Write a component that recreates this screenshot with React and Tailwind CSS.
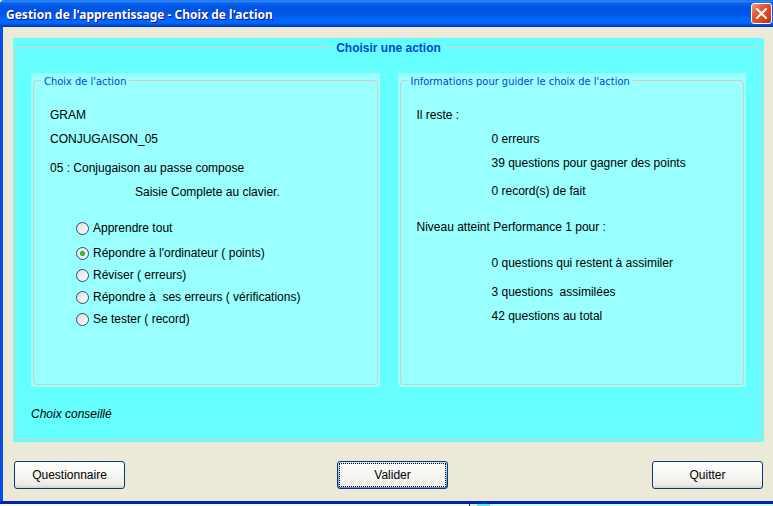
import { useState } from "react";

const SANS = "font-['Liberation_Sans',Arial,sans-serif]";

function Row({ className = "", children }) {
  return <p className={`h-4 whitespace-pre leading-4 ${className}`}>{children}</p>;
}

function Group({ title, children }) {
  return (
    <section className="flex bg-[#99ffff] px-[2px] pb-[2px]">
      <fieldset className="min-w-0 flex-1 rounded-[4px] border border-solid border-[#d6ccbc] pl-4 pb-[57px]">
        <legend className="-ml-[9px] h-[15px] px-[3px] font-['DejaVu_Sans_Condensed','DejaVu_Sans',Tahoma,sans-serif] text-[11px] leading-[18px] text-[#0046d5]">
          {title}
        </legend>
        {children}
      </fieldset>
    </section>
  );
}

const CHOICES = [
  { id: "tout", label: "Apprendre tout", space: "mt-5" },
  { id: "points", label: "Répondre à l'ordinateur ( points)", space: "mt-[9px]" },
  { id: "erreurs", label: "Réviser ( erreurs)", space: "mt-[6px]" },
  { id: "verif", label: "Répondre à  ses erreurs ( vérifications)", space: "mt-[6px]" },
  { id: "record", label: "Se tester ( record)", space: "mt-[6px]" },
];

function Choice({ choice, checked, onChange }) {
  return (
    <label className={`ml-[26px] flex h-4 items-center gap-1 whitespace-pre leading-4 ${choice.space}`}>
      <input
        type="radio"
        name="action"
        checked={checked}
        onChange={() => onChange(choice.id)}
        className="size-[13px] shrink-0 appearance-none rounded-full border border-[#21517f] bg-[linear-gradient(135deg,#dcdcd7,#ffffff)] checked:bg-[radial-gradient(circle,#55d551_0px,#21a121_2px,#f3f3ef_3px)]"
      />
      {choice.label}
    </label>
  );
}

function Button({ focused = false, children }) {
  return (
    <button
      type="button"
      className={`h-7 w-[111px] rounded-[3px] border border-[#003c74] text-center leading-4 ${
        focused
          ? "bg-[linear-gradient(#cee7ff,#6982ee)] p-px"
          : "bg-[linear-gradient(#ffffff,#f4f3ee_60%,#ecebe6_88%,#d6d0c5)]"
      }`}
    >
      {focused ? (
        <span className="flex h-full items-center justify-center border border-dotted border-black bg-[linear-gradient(#fafaf8,#f0f0ea)]">
          {children}
        </span>
      ) : (
        children
      )}
    </button>
  );
}

export default function App() {
  const [action, setAction] = useState("points");

  return (
    <div className={`bg-[#f6f3e9] text-[12px] text-black ${SANS}`}>
      <div className="border-b-[3px] border-[#0023b8] bg-[#ece9d8]">
        <header className="flex h-[27px] items-center justify-between rounded-tl-[4px] bg-[linear-gradient(#0a5bd8,#3c97ff_4%,#0a66ee_10%,#0054e3_25%,#0055e5_50%,#0066ff_70%,#0066ff_86%,#0046cf_94%,#003ab0)] pl-[6px] pr-px">
          <h1 className="pt-[2px] font-['Noto_Sans','Open_Sans',sans-serif] text-[12px] leading-4 font-bold whitespace-nowrap text-white [text-shadow:1px_1px_#0f1089]">
            Gestion de l'apprentissage - Choix de l'action
          </h1>
          <button
            type="button"
            aria-label="Fermer"
            className="flex size-[21px] items-center justify-center rounded-[3px] border border-white bg-[linear-gradient(135deg,#f0a088,#e25a35_35%,#d8441c_70%,#b43310)]"
          >
            <svg viewBox="0 0 11 11" className="size-[11px]" stroke="#fff" strokeWidth="2" strokeLinecap="square">
              <path d="M1 1l9 9M10 1l-9 9" />
            </svg>
          </button>
        </header>

        <main className="border-l-[3px] border-[#0a50e6] pt-[11px] pr-[9px] pb-3 pl-[10px]">
          <div className="bg-[#66ffff] px-[2px] pb-[2px]">
            <fieldset className="min-w-0 rounded-[4px] border border-solid border-[#d6ccbc] px-[15px] pt-[18px] pb-[17px]">
              <legend className="mx-auto h-[17px] px-[3px] text-[12px] leading-5 font-bold text-[#0046d5]">
                Choisir une action
              </legend>
              <div className="grid grid-cols-2 gap-[18px]">
                <Group title="Choix de l'action">
                  <Row className="mt-[19px]">GRAM</Row>
                  <Row className="mt-2">CONJUGAISON_05</Row>
                  <Row className="mt-[13px]">05 : Conjugaison au passe compose</Row>
                  <Row className="mt-2 ml-[85px]">Saisie Complete au clavier.</Row>
                  {CHOICES.map((c) => (
                    <Choice key={c.id} choice={c} checked={action === c.id} onChange={setAction} />
                  ))}
                </Group>
                <Group title="Informations pour guider le choix de l'action">
                  <Row className="mt-[19px]">Il reste :</Row>
                  <div className="ml-[75px]">
                    <Row className="mt-2">0 erreurs</Row>
                    <Row className="mt-2">39 questions pour gagner des points</Row>
                    <Row className="mt-3">0 record(s) de fait</Row>
                  </div>
                  <Row className="mt-5">Niveau atteint Performance 1 pour :</Row>
                  <div className="ml-[75px]">
                    <Row className="mt-5">0 questions qui restent à assimiler</Row>
                    <Row className="mt-[13px]">3 questions  assimilées</Row>
                    <Row className="mt-2">42 questions au total</Row>
                  </div>
                </Group>
              </div>
              <Row className="mt-[19px] italic">Choix conseillé</Row>
            </fieldset>
          </div>

          <div className="mt-[19px] flex justify-between pr-px pl-px">
            <Button>Questionnaire</Button>
            <div className="pl-2">
              <Button focused>Valider</Button>
            </div>
            <Button>Quitter</Button>
          </div>
        </main>
      </div>
      <div className="flex h-[2px]">
        <span className="w-[469px] bg-[#f8f5ec]" />
        <span className="w-px bg-[#10305c]" />
        <span className="w-[7px] bg-[#ece9d8]" />
        <span className="w-[13px] bg-[#55eef0]" />
        <span className="w-[3px] bg-[#e0e8dc]" />
        <span className="flex-1 bg-[#ccffff]" />
      </div>
    </div>
  );
}
